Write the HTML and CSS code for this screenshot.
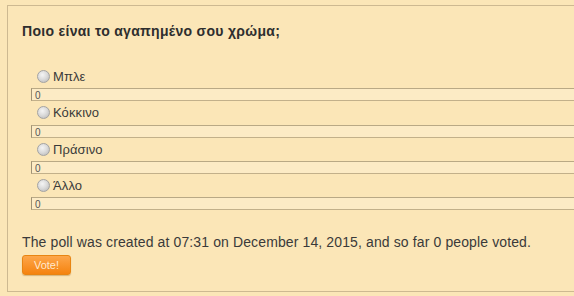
FILE: index.html
```html
<!DOCTYPE html>
<html lang="el">
<head>
<meta charset="utf-8">
<title>Poll</title>
<link rel="stylesheet" href="styles.css">
</head>
<body>
<div class="poll">
  <h2 class="question">Ποιο είναι το αγαπημένο σου χρώμα;</h2>
  <div class="options">
    <div class="option">
      <label class="choice"><span class="radio"></span>Μπλε</label>
      <div class="bar">0</div>
    </div>
    <div class="option">
      <label class="choice"><span class="radio"></span>Κόκκινο</label>
      <div class="bar">0</div>
    </div>
    <div class="option">
      <label class="choice"><span class="radio"></span>Πράσινο</label>
      <div class="bar">0</div>
    </div>
    <div class="option">
      <label class="choice"><span class="radio"></span>Άλλο</label>
      <div class="bar">0</div>
    </div>
  </div>
  <p class="info">The poll was created at 07:31 on December 14, 2015, and so far 0 people voted.</p>
  <button class="vote">Vote!</button>
</div>
</body>
</html>
```
FILE: styles.css
```css
html, body {
  margin: 0;
  padding: 0;
  background: #fbe6b7;
  overflow: hidden;
  font-family: "Liberation Sans", Arial, sans-serif;
  color: #333;
}

.poll {
  margin: 5px 0 0 7px;
  width: 640px;
  border: 1px solid #cdb991;
  padding: 17px 14px 16px 14px;
  box-sizing: border-box;
  background: #fbe6b7;
}

.question {
  margin: 0;
  font-size: 14px;
  line-height: 16px;
  font-weight: bold;
  letter-spacing: 0.3px;
  color: #2e2e2e;
}

.options {
  margin: 26px 0 0 9px;
  display: flex;
  flex-direction: column;
}

.choice {
  display: flex;
  align-items: center;
  height: 23.33px;
  padding-left: 6px;
  font-size: 13px;
  letter-spacing: 0.1px;
  color: #3a3a3a;
}

.radio {
  width: 11px;
  height: 11px;
  border-radius: 50%;
  border: 1px solid #a3a3a3;
  background: radial-gradient(circle at 40% 35%, #f4f4f4 0%, #dcdcdc 45%, #b5b5b5 100%);
  margin: 0 3px 0 0;
  flex: none;
}

.bar {
  height: 11px;
  border: 1px solid #c2b08a;
  border-left-color: #a09276;
  border-top-color: #b9a985;
  background: #fcebc5;
  font-size: 10px;
  line-height: 13px;
  padding-left: 3px;
  color: #555;
}

.info {
  margin: 24px 0 0 0;
  font-size: 14px;
  line-height: 16px;
  letter-spacing: 0.12px;
  color: #3a3a3a;
}

.vote {
  display: block;
  margin-top: 5px;
  width: 49px;
  height: 20px;
  padding: 0;
  border: 1px solid #e88512;
  border-radius: 3px;
  background: linear-gradient(#fda64a, #f5830f);
  color: #ffe9cf;
  font-family: "Liberation Sans", Arial, sans-serif;
  font-size: 11px;
  line-height: 18px;
  box-shadow: 0 1px 1px rgba(150, 90, 20, 0.35);
}
```
